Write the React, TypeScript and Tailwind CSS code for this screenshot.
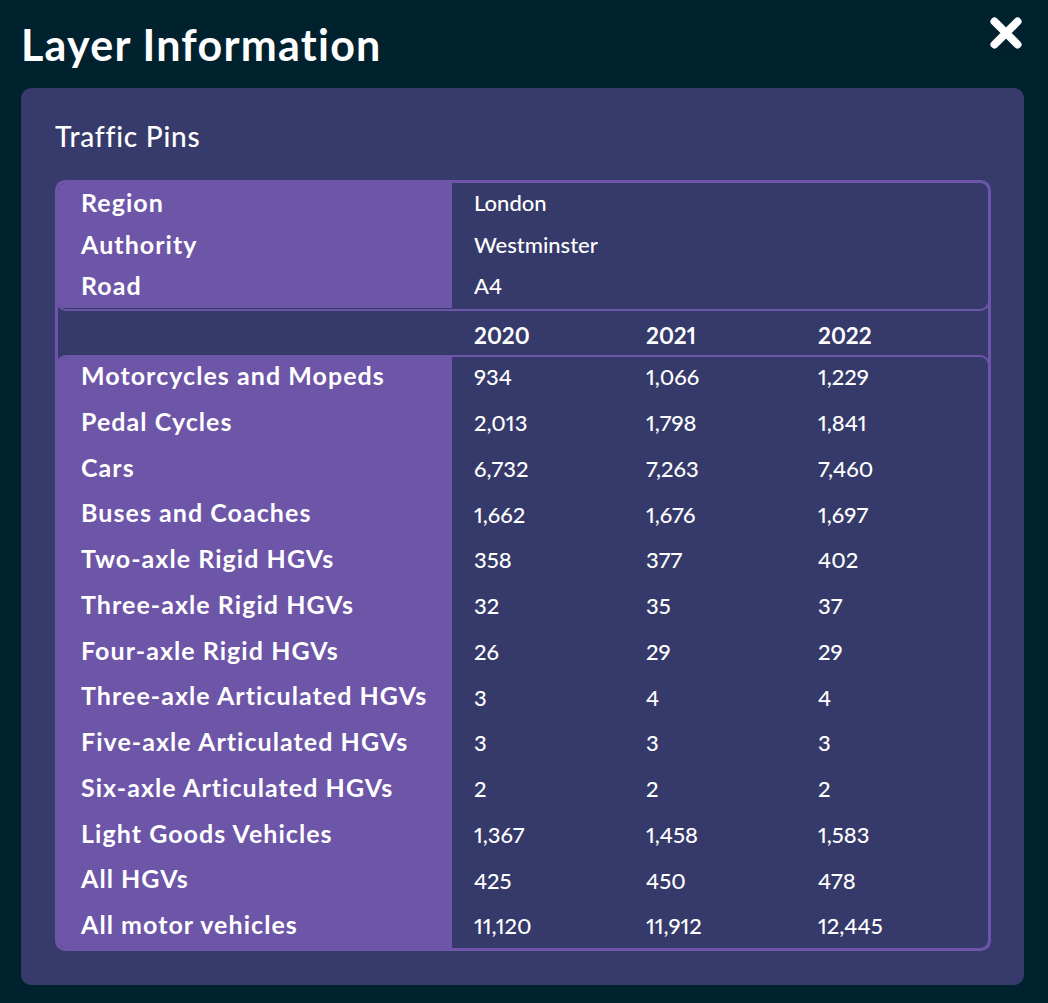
const infoRows = [
    ['Region', 'London'],
    ['Authority', 'Westminster'],
    ['Road', 'A4'],
];

const years = ['2020', '2021', '2022'];

const trafficRows = [
    ['Motorcycles and Mopeds', '934', '1,066', '1,229'],
    ['Pedal Cycles', '2,013', '1,798', '1,841'],
    ['Cars', '6,732', '7,263', '7,460'],
    ['Buses and Coaches', '1,662', '1,676', '1,697'],
    ['Two-axle Rigid HGVs', '358', '377', '402'],
    ['Three-axle Rigid HGVs', '32', '35', '37'],
    ['Four-axle Rigid HGVs', '26', '29', '29'],
    ['Three-axle Articulated HGVs', '3', '4', '4'],
    ['Five-axle Articulated HGVs', '3', '3', '3'],
    ['Six-axle Articulated HGVs', '2', '2', '2'],
    ['Light Goods Vehicles', '1,367', '1,458', '1,583'],
    ['All HGVs', '425', '450', '478'],
    ['All motor vehicles', '11,120', '11,912', '12,445'],
];

function CloseIcon() {
    return (
        <svg viewBox="0 0 32 32" className="h-8 w-8" aria-label="Close">
            <path d="M4.5 4.5 L27.5 27.5 M27.5 4.5 L4.5 27.5" stroke="#ffffff" strokeWidth="8" strokeLinecap="round" />
        </svg>
    );
}

export default function App() {
    return (
        <div className="h-[1003px] w-[1048px] overflow-hidden bg-[#00222f] font-['Lato','Liberation_Sans',sans-serif] text-white proportional-nums [font-variant-ligatures:none]">
            <div className="flex h-[88px] items-start justify-between pl-[21px] pr-[26px]">
                <h1 className="mt-[17px] text-[43px] leading-[56px] font-bold tracking-[1.25px]">Layer Information</h1>
                <button type="button" className="mt-[17px]">
                    <CloseIcon />
                </button>
            </div>
            <div className="mx-[21px] h-[897px] w-[1003px] rounded-[10px] bg-[#363b6b] px-[34px] pt-[31px]">
                <h2 className="h-[61px] text-[28px] leading-[34px] font-medium tracking-[0.8px]">Traffic Pins</h2>
                <div className="h-[771px] w-[936px] rounded-[10px] border-[3px] border-[#6d55a8] bg-[#353a6a]">
                    <div className="-mx-[2px] -mt-[2px] h-[130px] overflow-hidden rounded-[10px] border-2 border-[#6d55a8]">
                        {infoRows.map(([label, value]) => (
                            <div key={label} className="flex h-[41.6px] items-center">
                                <div className="h-full w-[394px] shrink-0 bg-[#6d55a8] pl-[23px] text-[25px] leading-[38px] font-bold tracking-[1.05px]">{label}</div>
                                <div className="pb-[2px] pl-[22px] text-[22px] font-medium">{value}</div>
                            </div>
                        ))}
                    </div>
                    <div className="flex h-[44px] items-center pl-[416px] pt-[6px] text-[22.5px] font-bold">
                        {years.map((year) => (
                            <div key={year} className="w-[172px] shrink-0">{year}</div>
                        ))}
                    </div>
                    <div className="-mx-[2px] h-[595px] overflow-hidden rounded-[10px] border-2 border-[#6d55a8]">
                        <div className="-mt-[3px]">
                            {trafficRows.map(([label, a, b, c]) => (
                                <div key={label} className="flex h-[45.75px] items-center">
                                    <div className="h-full w-[394px] shrink-0 bg-[#6d55a8] pl-[23px] text-[25px] leading-[43px] font-bold tracking-[1.05px]">{label}</div>
                                    <div className="flex pl-[22px] text-[22px] font-medium">
                                        <div className="w-[172px]">{a}</div>
                                        <div className="w-[172px]">{b}</div>
                                        <div className="w-[172px]">{c}</div>
                                    </div>
                                </div>
                            ))}
                        </div>
                        <div className="h-[10px] w-[394px] bg-[#6d55a8]" />
                    </div>
                </div>
            </div>
        </div>
    );
}
